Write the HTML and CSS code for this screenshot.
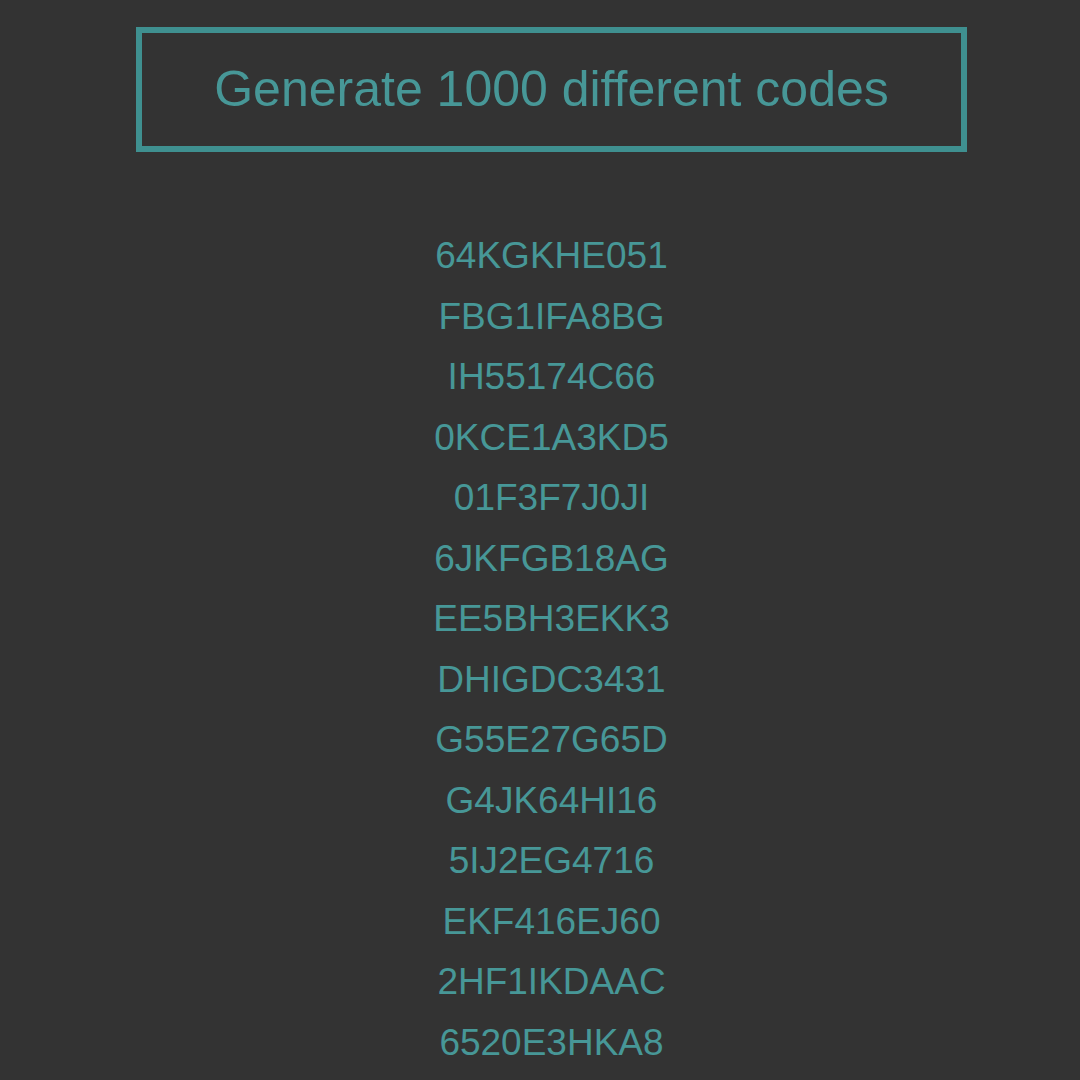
FILE: index.html
```html
<!DOCTYPE html>
<html>
<head>
<meta charset="utf-8">
<link rel="stylesheet" href="styles.css">
</head>
<body>
<div class="page">
  <div class="generate">Generate 1000 different codes</div>
  <ul class="codes">
    <li>64KGKHE051</li>
    <li>FBG1IFA8BG</li>
    <li>IH55174C66</li>
    <li>0KCE1A3KD5</li>
    <li>01F3F7J0JI</li>
    <li>6JKFGB18AG</li>
    <li>EE5BH3EKK3</li>
    <li>DHIGDC3431</li>
    <li>G55E27G65D</li>
    <li>G4JK64HI16</li>
    <li>5IJ2EG4716</li>
    <li>EKF416EJ60</li>
    <li>2HF1IKDAAC</li>
    <li>6520E3HKA8</li>
  </ul>
</div>
</body>
</html>
```
FILE: styles.css
```css
html, body {
  margin: 0;
  padding: 0;
  background: #333333;
  height: 100%;
  overflow: hidden;
}
body {
  font-family: "Liberation Sans", Arial, sans-serif;
  color: #479797;
}
.page {
  width: 831px;
  margin-left: 136px;
  padding-top: 27px;
}
.generate {
  box-sizing: border-box;
  height: 125px;
  border: 6px solid #3f9090;
  display: flex;
  align-items: center;
  justify-content: center;
  font-size: 50px;
  padding-bottom: 2px;
}
.codes {
  list-style: none;
  margin: 0;
  padding: 74px 0 0;
  text-align: center;
  font-size: 37px;
  line-height: 60.5px;
}
.codes li {
  margin: 0;
}
```
